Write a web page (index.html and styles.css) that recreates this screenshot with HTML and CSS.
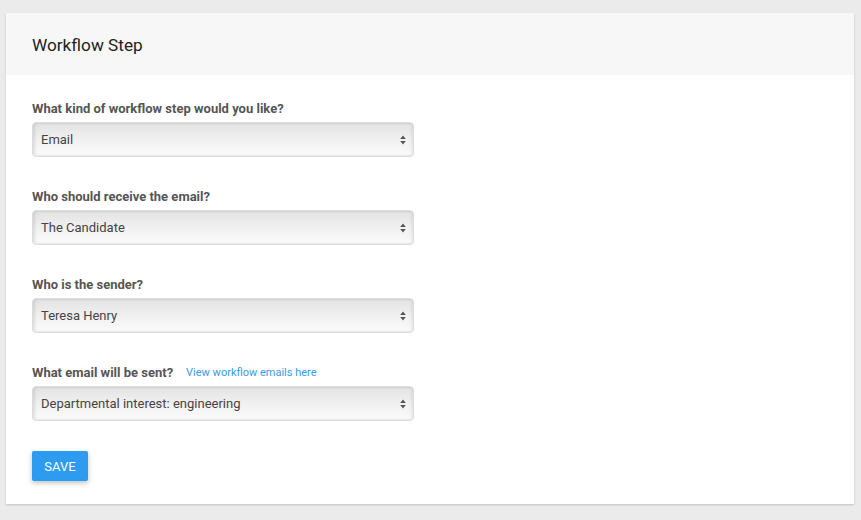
FILE: index.html
```html
<!DOCTYPE html>
<html>
<head>
<meta charset="utf-8">
<link rel="stylesheet" href="styles.css">
</head>
<body>
<div class="card">
  <div class="card-header"><h1 class="title">Workflow Step</h1></div>
  <div class="card-body">
    <div class="group">
      <div class="label-row"><span class="label">What kind of workflow step would you like?</span></div>
      <div class="select"><span class="value">Email</span><svg class="arrows" width="6" height="10" viewBox="0 0 6 10"><path d="M3 0.5 L5.8 4 L0.2 4 Z M0.2 6 L5.8 6 L3 9.5 Z" fill="#555"/></svg></div>
    </div>
    <div class="group">
      <div class="label-row"><span class="label">Who should receive the email?</span></div>
      <div class="select"><span class="value">The Candidate</span><svg class="arrows" width="6" height="10" viewBox="0 0 6 10"><path d="M3 0.5 L5.8 4 L0.2 4 Z M0.2 6 L5.8 6 L3 9.5 Z" fill="#555"/></svg></div>
    </div>
    <div class="group">
      <div class="label-row"><span class="label">Who is the sender?</span></div>
      <div class="select"><span class="value">Teresa Henry</span><svg class="arrows" width="6" height="10" viewBox="0 0 6 10"><path d="M3 0.5 L5.8 4 L0.2 4 Z M0.2 6 L5.8 6 L3 9.5 Z" fill="#555"/></svg></div>
    </div>
    <div class="group last">
      <div class="label-row"><span class="label">What email will be sent?</span><a class="link" href="#">View workflow emails here</a></div>
      <div class="select"><span class="value">Departmental interest: engineering</span><svg class="arrows" width="6" height="10" viewBox="0 0 6 10"><path d="M3 0.5 L5.8 4 L0.2 4 Z M0.2 6 L5.8 6 L3 9.5 Z" fill="#555"/></svg></div>
    </div>
    <button class="btn">SAVE</button>
  </div>
</div>
</body>
</html>
```
FILE: styles.css
```css
html, body {
  margin: 0;
  padding: 0;
}
body {
  background: #ebebeb;
  font-family: Roboto, "Liberation Sans", Arial, sans-serif;
  padding: 13px 7px 16px 6px;
  height: 520px;
  box-sizing: border-box;
}
.card {
  background: #fff;
  box-shadow: 0 1px 2px rgba(0,0,0,0.18);
  height: 491px;
  display: flex;
  flex-direction: column;
}
.card-header {
  background: #f7f7f7;
  height: 62px;
  display: flex;
  align-items: center;
  padding-left: 26px;
}
.title {
  margin: 0;
  font-size: 17.2px;
  font-weight: 400;
  color: #222;
  padding-top: 2px;
}
.card-body {
  padding: 26px 26px 23px 26px;
  display: flex;
  flex-direction: column;
  align-items: flex-start;
}
.group {
  margin-bottom: 32px;
}
.group.last {
  margin-bottom: 30px;
}
.label-row {
  height: 16px;
  line-height: 16px;
  margin-bottom: 5px;
  display: flex;
  align-items: center;
}
.label {
  font-size: 13px;
  font-weight: 700;
  color: #555;
}
.link {
  font-size: 11px;
  color: #3a9be6;
  text-decoration: none;
  margin-left: 13px;
}
.select {
  width: 382px;
  height: 35px;
  box-sizing: border-box;
  border: 1px solid #dcdcdc;
  border-radius: 4px;
  background: linear-gradient(to bottom, #e3e3e3 0%, #efefef 45%, #fbfbfb 100%);
  box-shadow: inset 2px 0 3px rgba(0,0,0,0.10), inset -2px 0 3px rgba(0,0,0,0.06);
  display: flex;
  align-items: center;
  justify-content: space-between;
  padding: 0 7px 0 8px;
}
.value {
  font-size: 13px;
  color: #444;
}
.arrows {
  display: block;
  margin-top: 1px;
}
.btn {
  width: 56px;
  height: 30px;
  border: none;
  border-radius: 2px;
  background: #2d9bf0;
  color: #fff;
  font-family: Roboto, "Liberation Sans", Arial, sans-serif;
  font-size: 13px;
  padding: 0;
  box-shadow: 0 2px 5px rgba(0,0,0,0.25);
  cursor: pointer;
}
```
